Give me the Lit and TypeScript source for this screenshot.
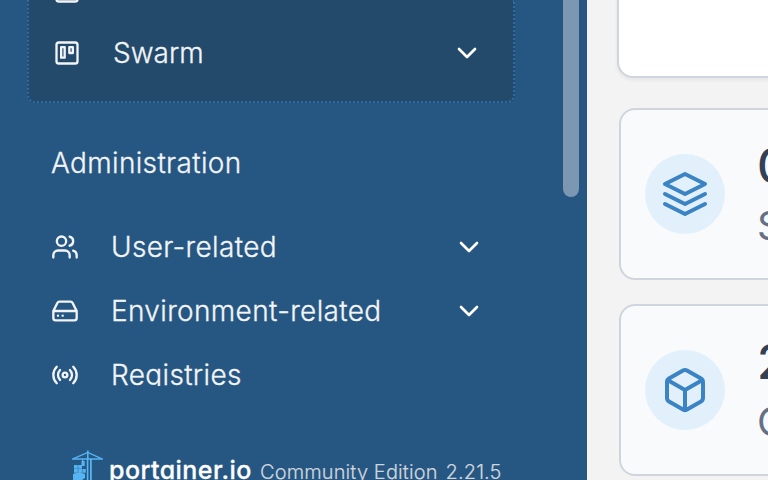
import { LitElement, html, svg, css } from "lit";
import { customElement } from "lit/decorators.js";

const glyphs = {
  swarm: svg`<rect x="3" y="3" width="18" height="18" rx="2"/><rect x="7" y="7" width="3" height="9"/><rect x="14" y="7" width="3" height="5"/>`,
  users: svg`<path d="M16 21v-2a4 4 0 0 0-4-4H6a4 4 0 0 0-4 4v2"/><circle cx="9" cy="7" r="4"/><path d="M22 21v-2a4 4 0 0 0-3-3.87M16 3.13a4 4 0 0 1 0 7.75"/>`,
  drive: svg`<path d="M22 12H2M5.45 5.11 2 12v6a2 2 0 0 0 2 2h16a2 2 0 0 0 2-2v-6l-3.45-6.89A2 2 0 0 0 16.76 4H7.24a2 2 0 0 0-1.79 1.11zM6 16h.01M10 16h.01"/>`,
  radio: svg`<circle cx="12" cy="12" r="2"/><path d="M16.24 7.76a6 6 0 0 1 0 8.49M7.76 16.24a6 6 0 0 1 0-8.49M19.07 4.93a10 10 0 0 1 0 14.14M4.93 19.07a10 10 0 0 1 0-14.14"/>`,
  chevron: svg`<path d="m6 9 6 6 6-6"/>`,
  layers: svg`<path d="M12 2 2 7l10 5 10-5-10-5zM2 17l10 5 10-5M2 12l10 5 10-5"/>`,
  box: svg`<path d="M21 16V8a2 2 0 0 0-1-1.73l-7-4a2 2 0 0 0-2 0l-7 4A2 2 0 0 0 3 8v8a2 2 0 0 0 1 1.73l7 4a2 2 0 0 0 2 0l7-4A2 2 0 0 0 21 16zM3.27 6.96 12 12.01l8.73-5.05M12 22.08V12"/>`,
};
type Glyph = keyof typeof glyphs;

const icon = (name: Glyph, cls: string) =>
  html`<svg class="icon ${cls}" viewBox="0 0 24 24">${glyphs[name]}</svg>`;

const row = (name: Glyph, label: string, expandable = true) => html`
  <div class="row">
    ${icon(name, "small")}<span class="label">${label}</span>
    ${expandable ? icon("chevron", "chevron") : ""}
  </div>`;

const stat = (name: Glyph, value: string, label: string) => html`
  <section class="card">
    <div class="disc">${icon(name, "large")}</div>
    <div class="figures"><div class="value">${value}</div><div class="caption">${label}</div></div>
  </section>`;

@customElement("app-root")
export class AppRoot extends LitElement {
  static styles = css`
    :host { display: flex; width: 768px; height: 480px; overflow: hidden; background: #f3f3f3; font-family: Inter, "Liberation Sans", sans-serif; }
    * { box-sizing: border-box; }
    .icon { fill: none; stroke: currentColor; stroke-width: 2; stroke-linecap: round; stroke-linejoin: round; flex: none; display: block; }
    .small { width: 28px; height: 28px; stroke-width: 2; }
    .chevron { width: 32px; height: 32px; color: #fff; }
    .large { width: 48px; height: 48px; }
    .sidebar { position: relative; flex: none; width: 587px; height: 480px; background: #265782; color: #f2f4f7; display: flex; flex-direction: column; overflow: hidden; }
    .nav { flex: none; height: 386px; overflow: hidden; }
    .env { margin-left: 27px; width: 488px; height: 103px; border: 2px dotted #2f6ba6; border-top: 0; border-radius: 0 0 8px 8px; background: #23496b; padding: 0 30px 0 24px; overflow: hidden; }
    .env .peek { height: 28px; width: 28px; margin-top: -23px; }
    .env .row { margin-top: 16px; padding: 0; height: 64px; }
    .row { display: flex; align-items: center; height: 64px; padding: 0 0 0 51px; width: 485px; }
    .env .row { width: auto; }
    .label, .heading { font-size: 28px; line-height: 40px; font-weight: 300; letter-spacing: .34px; -webkit-text-stroke: .3px currentColor; }
    .label { flex: 1; margin-left: 32px; white-space: nowrap; }
    .env .label { letter-spacing: 0; }
    .heading { margin: 40px 0 32px 51px; }
    .thumb { position: absolute; left: 563px; top: -20px; width: 16px; height: 217px; border-radius: 8px; background: #7c97b2; }
    .footer { display: flex; align-items: flex-start; margin: 64px 0 0 71px; height: 30px; }
    .crane { width: 33px; height: 36px; flex: none; }
    .brand { margin: 3px 0 0 5px; width: 144px; font-size: 25px; line-height: 34px; font-weight: 500; letter-spacing: .45px; -webkit-text-stroke: .3px currentColor; color: #fff; font-feature-settings: "cv11"; white-space: nowrap; }
    .edition { margin: 7px 0 0 7px; font-size: 20px; line-height: 30px; font-weight: 300; letter-spacing: .12px; -webkit-text-stroke: .2px currentColor; color: #d0d5dd; white-space: nowrap; }
    .version { margin-left: 8px; }
    .main { flex: 1; min-width: 0; padding-left: 32px; overflow: hidden; }
    .panel { margin-left: -2px; height: 98px; margin-top: -20px; width: 300px; background: #fff; border: 2px solid #d0d5dd; border-radius: 16px; box-shadow: 0 2px 4px rgba(16, 24, 40, .06); }
    .card { display: flex; align-items: center; width: 400px; height: 172px; border: 2px solid #d0d5dd; border-radius: 16px; background: #f9fafb; padding-left: 24px; margin-bottom: 24px; }
    .panel + .card { margin-top: 30px; }
    .disc { flex: none; width: 80px; height: 80px; border-radius: 50%; background: #e2f0fc; color: #3a84c5; display: grid; place-items: center; }
    .figures { margin-left: 32px; padding-top: 4px; }
    .value { font-size: 48px; line-height: 60px; font-weight: 500; color: #344054; }
    .caption { font-size: 40px; line-height: 60px; color: #667085; }
  `;

  render() {
    return html`
      <aside class="sidebar">
        <nav class="nav">
          <div class="env">
            <svg class="icon small peek" viewBox="0 0 24 24"><rect x="3" y="3" width="18" height="18" rx="2"/></svg>
            ${row("swarm", "Swarm")}
          </div>
          <div class="heading">Administration</div>
          ${row("users", "User-related")}
          ${row("drive", "Environment-related")}
          ${row("radio", "Registries", false)}
        </nav>
        <div class="thumb"></div>
        <footer class="footer">
          <svg class="crane" viewBox="0 0 33 36" fill="#57b4f2">
            <path d="M1 8.2h31v1.6H1zM16 0.5h1.6v9H16zM15.8 9h1.6v27h-1.6zM19 9h1.8v27H19zM11 9h1.2v3H11z"/>
            <path d="M2.5 8.6 16.8 2.5 30.5 8.6" fill="none" stroke="#57b4f2" stroke-width="1.3"/>
            <path d="M3 15h3.8v3.7H3zM7.2 15h3.8v3.7H7.2zM3 19.1h3.8v3.6H3zM7.2 19.1h3.8v3.6H7.2zM11.4 19.1h3.3v3.6h-3.3zM10.5 11h3.2v5h-3.2zM2 24q6-2.5 12 0v4l-3 2H2z"/>
          </svg>
          <span class="brand">portainer.io</span>
          <span class="edition">Community Edition<span class="version">2.21.5</span></span>
        </footer>
      </aside>
      <main class="main">
        <div class="panel"></div>
        ${stat("layers", "0", "Stacks")}
        ${stat("box", "2", "Containers")}
      </main>`;
  }
}
